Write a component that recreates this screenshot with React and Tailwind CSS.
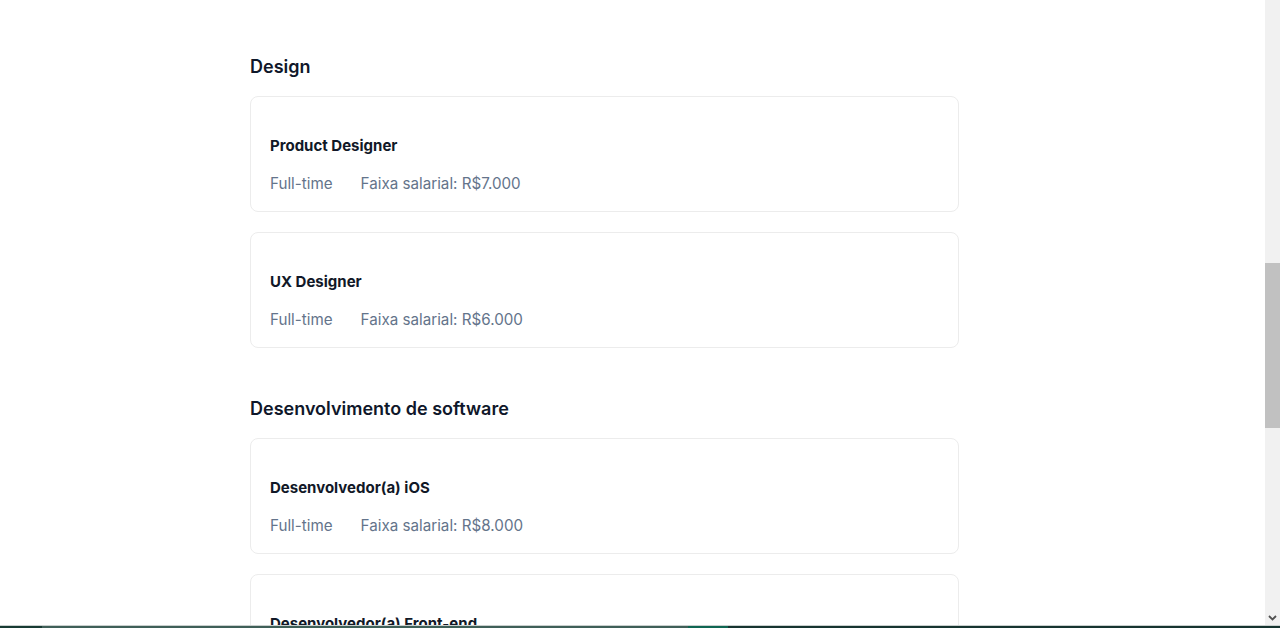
import React from "react";

const sections = [
  {
    title: "Design",
    jobs: [
      { title: "Product Designer", type: "Full-time", salary: "R$7.000" },
      { title: "UX Designer", type: "Full-time", salary: "R$6.000" },
    ],
  },
  {
    title: "Desenvolvimento de software",
    jobs: [
      { title: "Desenvolvedor(a) iOS", type: "Full-time", salary: "R$8.000" },
      { title: "Desenvolvedor(a) Front-end", type: "Full-time", salary: "R$9.000" },
    ],
  },
];

const JobCard = ({ job }) => (
  <div className="rounded-lg border border-[#ececec] bg-white px-[19px] pt-[37px] pb-[15px]">
    <h3 className="text-[15px] font-bold leading-6 text-[#111827]">{job.title}</h3>
    <div className="mt-[14px] flex gap-[28px] text-[15.2px] leading-6 text-[#64748b]">
      <span>{job.type}</span>
      <span>Faixa salarial: {job.salary}</span>
    </div>
  </div>
);

const Scrollbar = () => (
  <div className="relative flex w-[15px] flex-col bg-[#f1f1f1]">
    <div className="h-[263px]" />
    <div className="h-[165px] bg-[#c1c1c1]" />
    <div className="flex-1" />
    <div className="flex h-[15px] items-center justify-center">
      <svg width="9" height="6" viewBox="0 0 9 6">
        <path d="M1 1l3.5 3.5L8 1" fill="none" stroke="#505050" strokeWidth="1.8" />
      </svg>
    </div>
  </div>
);

export default function App() {
  return (
    <div
      className="flex h-screen w-full flex-col overflow-hidden bg-white"
      style={{ fontFamily: "Inter, 'Noto Sans', sans-serif" }}
    >
      <div className="flex min-h-0 flex-1">
        <div className="min-w-0 flex-1 overflow-hidden">
          <div className="ml-[250px] w-[709px] pt-[53px]">
            {sections.map((section, i) => (
              <section key={section.title} className={i > 0 ? "mt-[47px]" : ""}>
                <h2 className="text-lg font-semibold leading-7 text-[#0f172a]">{section.title}</h2>
                <div className="mt-[15px] flex flex-col gap-5">
                  {section.jobs.map((job) => (
                    <JobCard key={job.title} job={job} />
                  ))}
                </div>
              </section>
            ))}
          </div>
        </div>
        <Scrollbar />
      </div>
      {/* taskbar edge */}
      <div className="h-px w-full bg-[#c9cfcd]" />
      <div className="flex h-[2px] w-full">
        <div className="w-[42px] bg-[#173a33]" />
        <div className="w-[646px] bg-[#3f5f58]" />
        <div className="w-[40px] bg-[#0f6652]" />
        <div className="flex-1 bg-[#163430]" />
      </div>
    </div>
  );
}
